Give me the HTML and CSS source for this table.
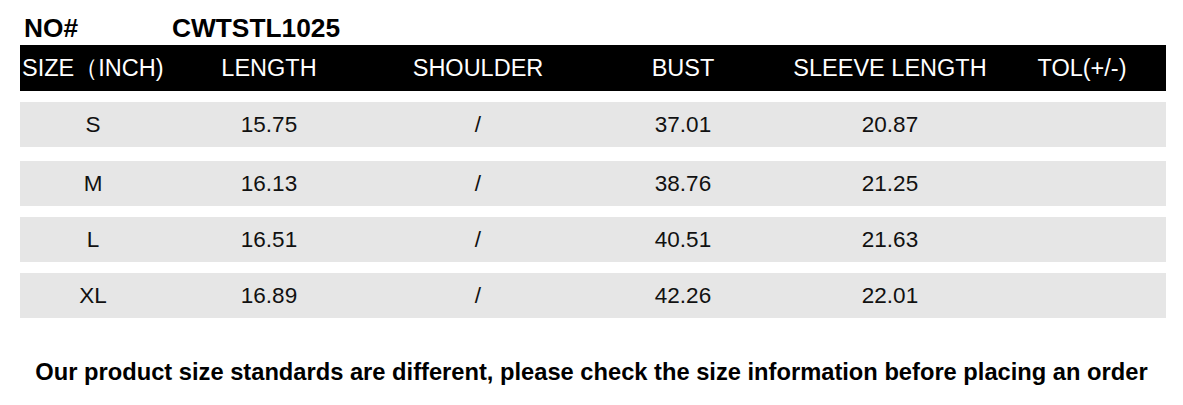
FILE: index.html
```html
<!DOCTYPE html>
<html>
<head>
<meta charset="utf-8">
<link rel="stylesheet" href="styles.css">
</head>
<body>
<div class="title">
  <span class="no">NO#</span>
  <span class="code">CWTSTL1025</span>
</div>
<div class="table">
  <div class="row head">
    <div class="c1 left">SIZE（INCH)</div>
    <div class="c2">LENGTH</div>
    <div class="c3">SHOULDER</div>
    <div class="c4">BUST</div>
    <div class="c5">SLEEVE LENGTH</div>
    <div class="c6">TOL(+/-)</div>
  </div>
  <div class="row data first">
    <div>S</div><div>15.75</div><div>/</div><div>37.01</div><div>20.87</div><div></div>
  </div>
  <div class="row data">
    <div>M</div><div>16.13</div><div>/</div><div>38.76</div><div>21.25</div><div></div>
  </div>
  <div class="row data">
    <div>L</div><div>16.51</div><div>/</div><div>40.51</div><div>21.63</div><div></div>
  </div>
  <div class="row data">
    <div>XL</div><div>16.89</div><div>/</div><div>42.26</div><div>22.01</div><div></div>
  </div>
</div>
<p class="note">Our product size standards are different, please check the size information before placing an order</p>
</body>
</html>
```

FILE: styles.css
```css
html, body {
  margin: 0;
  padding: 0;
  background: #ffffff;
}
body {
  font-family: "Liberation Sans", Arial, sans-serif;
  color: #000;
  width: 1183px;
}
.title {
  display: flex;
  padding-top: 13px;
  padding-left: 24px;
  height: 30px;
  line-height: 30px;
  margin-bottom: 2px;
  font-weight: bold;
  font-size: 26.3px;
}
.title .no {
  width: 148px;
}
.table {
  margin-left: 20px;
  width: 1146px;
  display: flex;
  flex-direction: column;
  gap: 11px;
}
.row {
  display: grid;
  grid-template-columns: 146px 206px 212px 198px 216px 1fr;
  align-items: center;
  text-align: center;
}
.head {
  background: #000;
  color: #fff;
  height: 46px;
  font-size: 23.5px;
}
.head .left {
  text-align: left;
  padding-left: 2px;
  white-space: nowrap;
}
.data {
  background: #e6e6e6;
  height: 45px;
  font-size: 22.5px;
  color: #111;
}
.data.first {
  margin-bottom: 3px;
}
.note {
  margin: 41px 0 0 0;
  text-align: center;
  font-weight: bold;
  font-size: 23.7px;
  line-height: 27px;
}
```
